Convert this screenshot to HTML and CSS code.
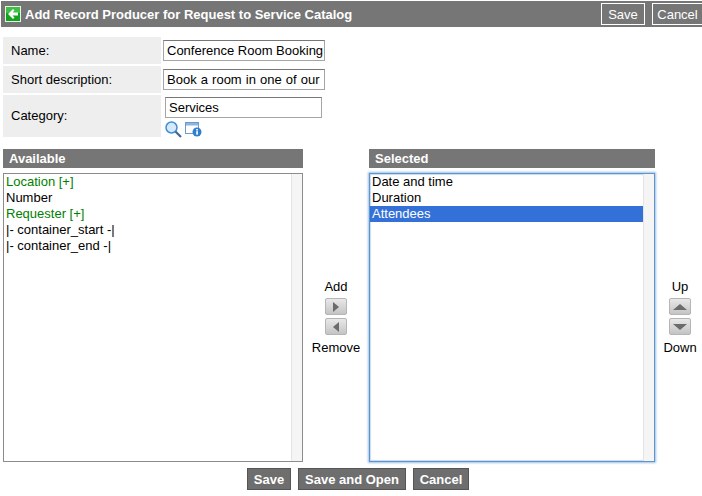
FILE: index.html
```html
<!DOCTYPE html>
<html>

<head>
    <title>Add Record Producer</title>
    <link rel="stylesheet" href="styles.css">
</head>

<body>

    <div class="top-bar">
        <svg class="back-icon" width="16" height="16" viewBox="0 0 16 16">
            <rect x="0.5" y="0.5" width="15" height="15" fill="#12a31f" stroke="#e8f2e8"/>
            <rect x="1" y="1" width="14" height="6" fill="#3fbf45"/>
            <path d="M3 8 L8 3 L9.5 4.5 L7.5 6.5 L13 6.5 L13 9.5 L7.5 9.5 L9.5 11.5 L8 13 Z" fill="#fff"/>
        </svg>
        <span class="top-title">Add Record Producer for Request to Service Catalog</span>
        <button class="top-btn top-save">Save</button>
        <button class="top-btn top-cancel">Cancel</button>
    </div>

    <div class="fields">
        <label class="field-label">Name:</label>
        <div class="field-value"><input class="text-input" type="text" value="Conference Room Booking"></div>

        <label class="field-label">Short description:</label>
        <div class="field-value"><input class="text-input short-input" type="text" value="Book a room in one of our sites"></div>

        <label class="field-label label-category">Category:</label>
        <div class="field-value category">
            <input class="text-input category-input" type="text" value="Services">
            <div class="category-icons">
                <svg width="17" height="17" viewBox="0 0 17 17">
                    <circle cx="6.5" cy="6.5" r="5.5" fill="#d5e9fb" stroke="#3f8fd6" stroke-width="1.5"/>
                    <path d="M10.5 10.5 L16 16" stroke="#44688c" stroke-width="2.2"/>
                </svg>
                <svg width="17" height="16" viewBox="0 0 17 16">
                    <rect x="0.5" y="1.5" width="13" height="11" fill="#fff" stroke="#6d9ccc"/>
                    <rect x="1" y="2" width="12" height="2.5" fill="#8db6de"/>
                    <circle cx="12" cy="11" r="4.5" fill="#2f7fd0"/>
                    <rect x="11.2" y="10.2" width="1.7" height="3.4" fill="#fff"/>
                    <rect x="11.2" y="8" width="1.7" height="1.5" fill="#fff"/>
                </svg>
            </div>
        </div>
    </div>

    <div class="picker">
        <div class="list-col list-available">
            <div class="list-title">Available</div>
            <div class="list-box">
                <div class="list-items">
                    <div class="item item-ref">Location [+]</div>
                    <div class="item">Number</div>
                    <div class="item item-ref">Requester [+]</div>
                    <div class="item">|- container_start -|</div>
                    <div class="item">|- container_end -|</div>
                </div>
                <div class="scroll-track"></div>
            </div>
        </div>

        <div class="move-col add-col">
            <div>Add</div>
            <button class="arrow-btn"><span class="tri tri-right"></span></button>
            <button class="arrow-btn"><span class="tri tri-left"></span></button>
            <div>Remove</div>
        </div>

        <div class="list-col list-selected">
            <div class="list-title">Selected</div>
            <div class="list-box focused">
                <div class="list-items">
                    <div class="item">Date and time</div>
                    <div class="item">Duration</div>
                    <div class="item item-selected">Attendees</div>
                </div>
                <div class="scroll-track"></div>
            </div>
        </div>

        <div class="move-col order-col">
            <div>Up</div>
            <button class="arrow-btn"><span class="tri tri-up"></span></button>
            <button class="arrow-btn"><span class="tri tri-down"></span></button>
            <div>Down</div>
        </div>
    </div>

    <div class="bottom-bar">
        <button class="bottom-btn btn-save">Save</button>
        <button class="bottom-btn btn-open">Save and Open</button>
        <button class="bottom-btn btn-cancel">Cancel</button>
    </div>

</body>

</html>
```

FILE: styles.css
```css
body {
    margin: 0;
    background: #fff;
    color: #000;
    font-family: "Liberation Sans", Arial, sans-serif;
    font-size: 13px;
    overflow: hidden;
}

.top-bar {
    display: flex;
    align-items: center;
    height: 26px;
    margin: 1px -1px 0 1px;
    padding-left: 4px;
    background: #767676;
}

.back-icon {
    flex: none;
    margin-right: 4px;
}

.top-title {
    flex: 1;
    color: #fff;
    font-weight: bold;
    font-size: 13px;
    white-space: nowrap;
}

.top-btn {
    flex: none;
    height: 22px;
    margin: 0;
    padding: 0;
    border: 1px solid #fff;
    background: #767676;
    color: #fff;
    font-family: inherit;
    font-size: 13px;
}

.top-save {
    width: 44px;
    margin-right: 7px;
}

.top-cancel {
    width: 51px;
}

.fields {
    display: grid;
    grid-template-columns: 158px 170px;
    grid-template-rows: 27px 27px 42px;
    row-gap: 2px;
    column-gap: 2px;
    margin: 10px 0 0 3px;
}

.field-label {
    display: flex;
    align-items: center;
    padding-left: 8px;
    background: #eeeeee;
}

.label-category {
    padding-bottom: 2px;
}

.field-value {
    display: flex;
    align-items: center;
}

.text-input {
    box-sizing: border-box;
    width: 162px;
    height: 21px;
    padding: 0 1px 0 3px;
    border: 1px solid #a5a5a5;
    border-top-color: #777;
    font-family: inherit;
    font-size: 13px;
}

.short-input {
    word-spacing: 0.5px;
}

.category {
    flex-direction: column;
    align-items: flex-start;
    padding: 2px 0 0 2px;
}

.category-input {
    flex: none;
    width: 157px;
}

.category-icons {
    display: flex;
    gap: 3px;
    margin-top: 3px;
}

.picker {
    display: flex;
    margin: 12px 0 0 3px;
}

.list-col {
    flex: none;
}

.list-available {
    width: 300px;
}

.list-selected {
    width: 286px;
}

.list-title {
    height: 19px;
    padding-left: 6px;
    background: #767676;
    color: #fff;
    font-size: 13px;
    font-weight: bold;
    line-height: 19px;
}

.list-box {
    display: flex;
    box-sizing: border-box;
    height: 289px;
    margin-top: 5px;
    border: 1px solid #8c8c8c;
}

.list-box.focused {
    border-color: #5f94cc;
    box-shadow: 0 0 2px 1px #9cc0e4, inset 0 0 1px 1px #c5daf0;
}

.list-items {
    flex: 1;
}

.list-available .list-items {
    padding: 0 2px;
}

.item {
    height: 16px;
    line-height: 16px;
    white-space: nowrap;
}

.list-selected .item {
    padding-left: 2px;
}

.item-ref {
    color: #008000;
}

.item-selected {
    background: #3371d8;
    color: #fff;
}

.scroll-track {
    width: 10px;
    border-left: 1px solid #e4e4e4;
    background: #f5f5f5;
}

.move-col {
    flex: none;
    display: flex;
    flex-direction: column;
    align-items: center;
    padding-top: 130px;
}

.add-col {
    width: 66px;
}

.order-col {
    width: 50px;
}

.arrow-btn {
    display: flex;
    align-items: center;
    justify-content: center;
    width: 22px;
    height: 17px;
    margin: 0;
    padding: 0;
    border: 1px solid #b5b5b5;
    border-radius: 2px;
    background: linear-gradient(#e8e8e8, #c4c4c4);
}

.arrow-btn + .arrow-btn {
    margin: 3px 0 5px;
}

.move-col div:first-child {
    margin-bottom: 4px;
}

.tri {
    width: 0;
    height: 0;
}

.tri-right {
    border-top: 5px solid transparent;
    border-bottom: 5px solid transparent;
    border-left: 6px solid #6b6b6b;
}

.tri-left {
    border-top: 5px solid transparent;
    border-bottom: 5px solid transparent;
    border-right: 6px solid #6b6b6b;
}

.tri-up {
    border-left: 7px solid transparent;
    border-right: 7px solid transparent;
    border-bottom: 6px solid #6b6b6b;
}

.tri-down {
    border-left: 7px solid transparent;
    border-right: 7px solid transparent;
    border-top: 6px solid #6b6b6b;
}

.bottom-bar {
    display: flex;
    justify-content: center;
    gap: 7px;
    margin: 6px 0 0 0;
    padding-left: 14px;
}

.bottom-btn {
    height: 22px;
    margin: 0;
    padding: 0;
    border: 1px solid #555;
    background: #6e6e6e;
    color: #fff;
    font-family: inherit;
    font-size: 13px;
    font-weight: bold;
}

.btn-save {
    width: 44px;
}

.btn-open {
    width: 108px;
}

.btn-cancel {
    width: 56px;
}
```
